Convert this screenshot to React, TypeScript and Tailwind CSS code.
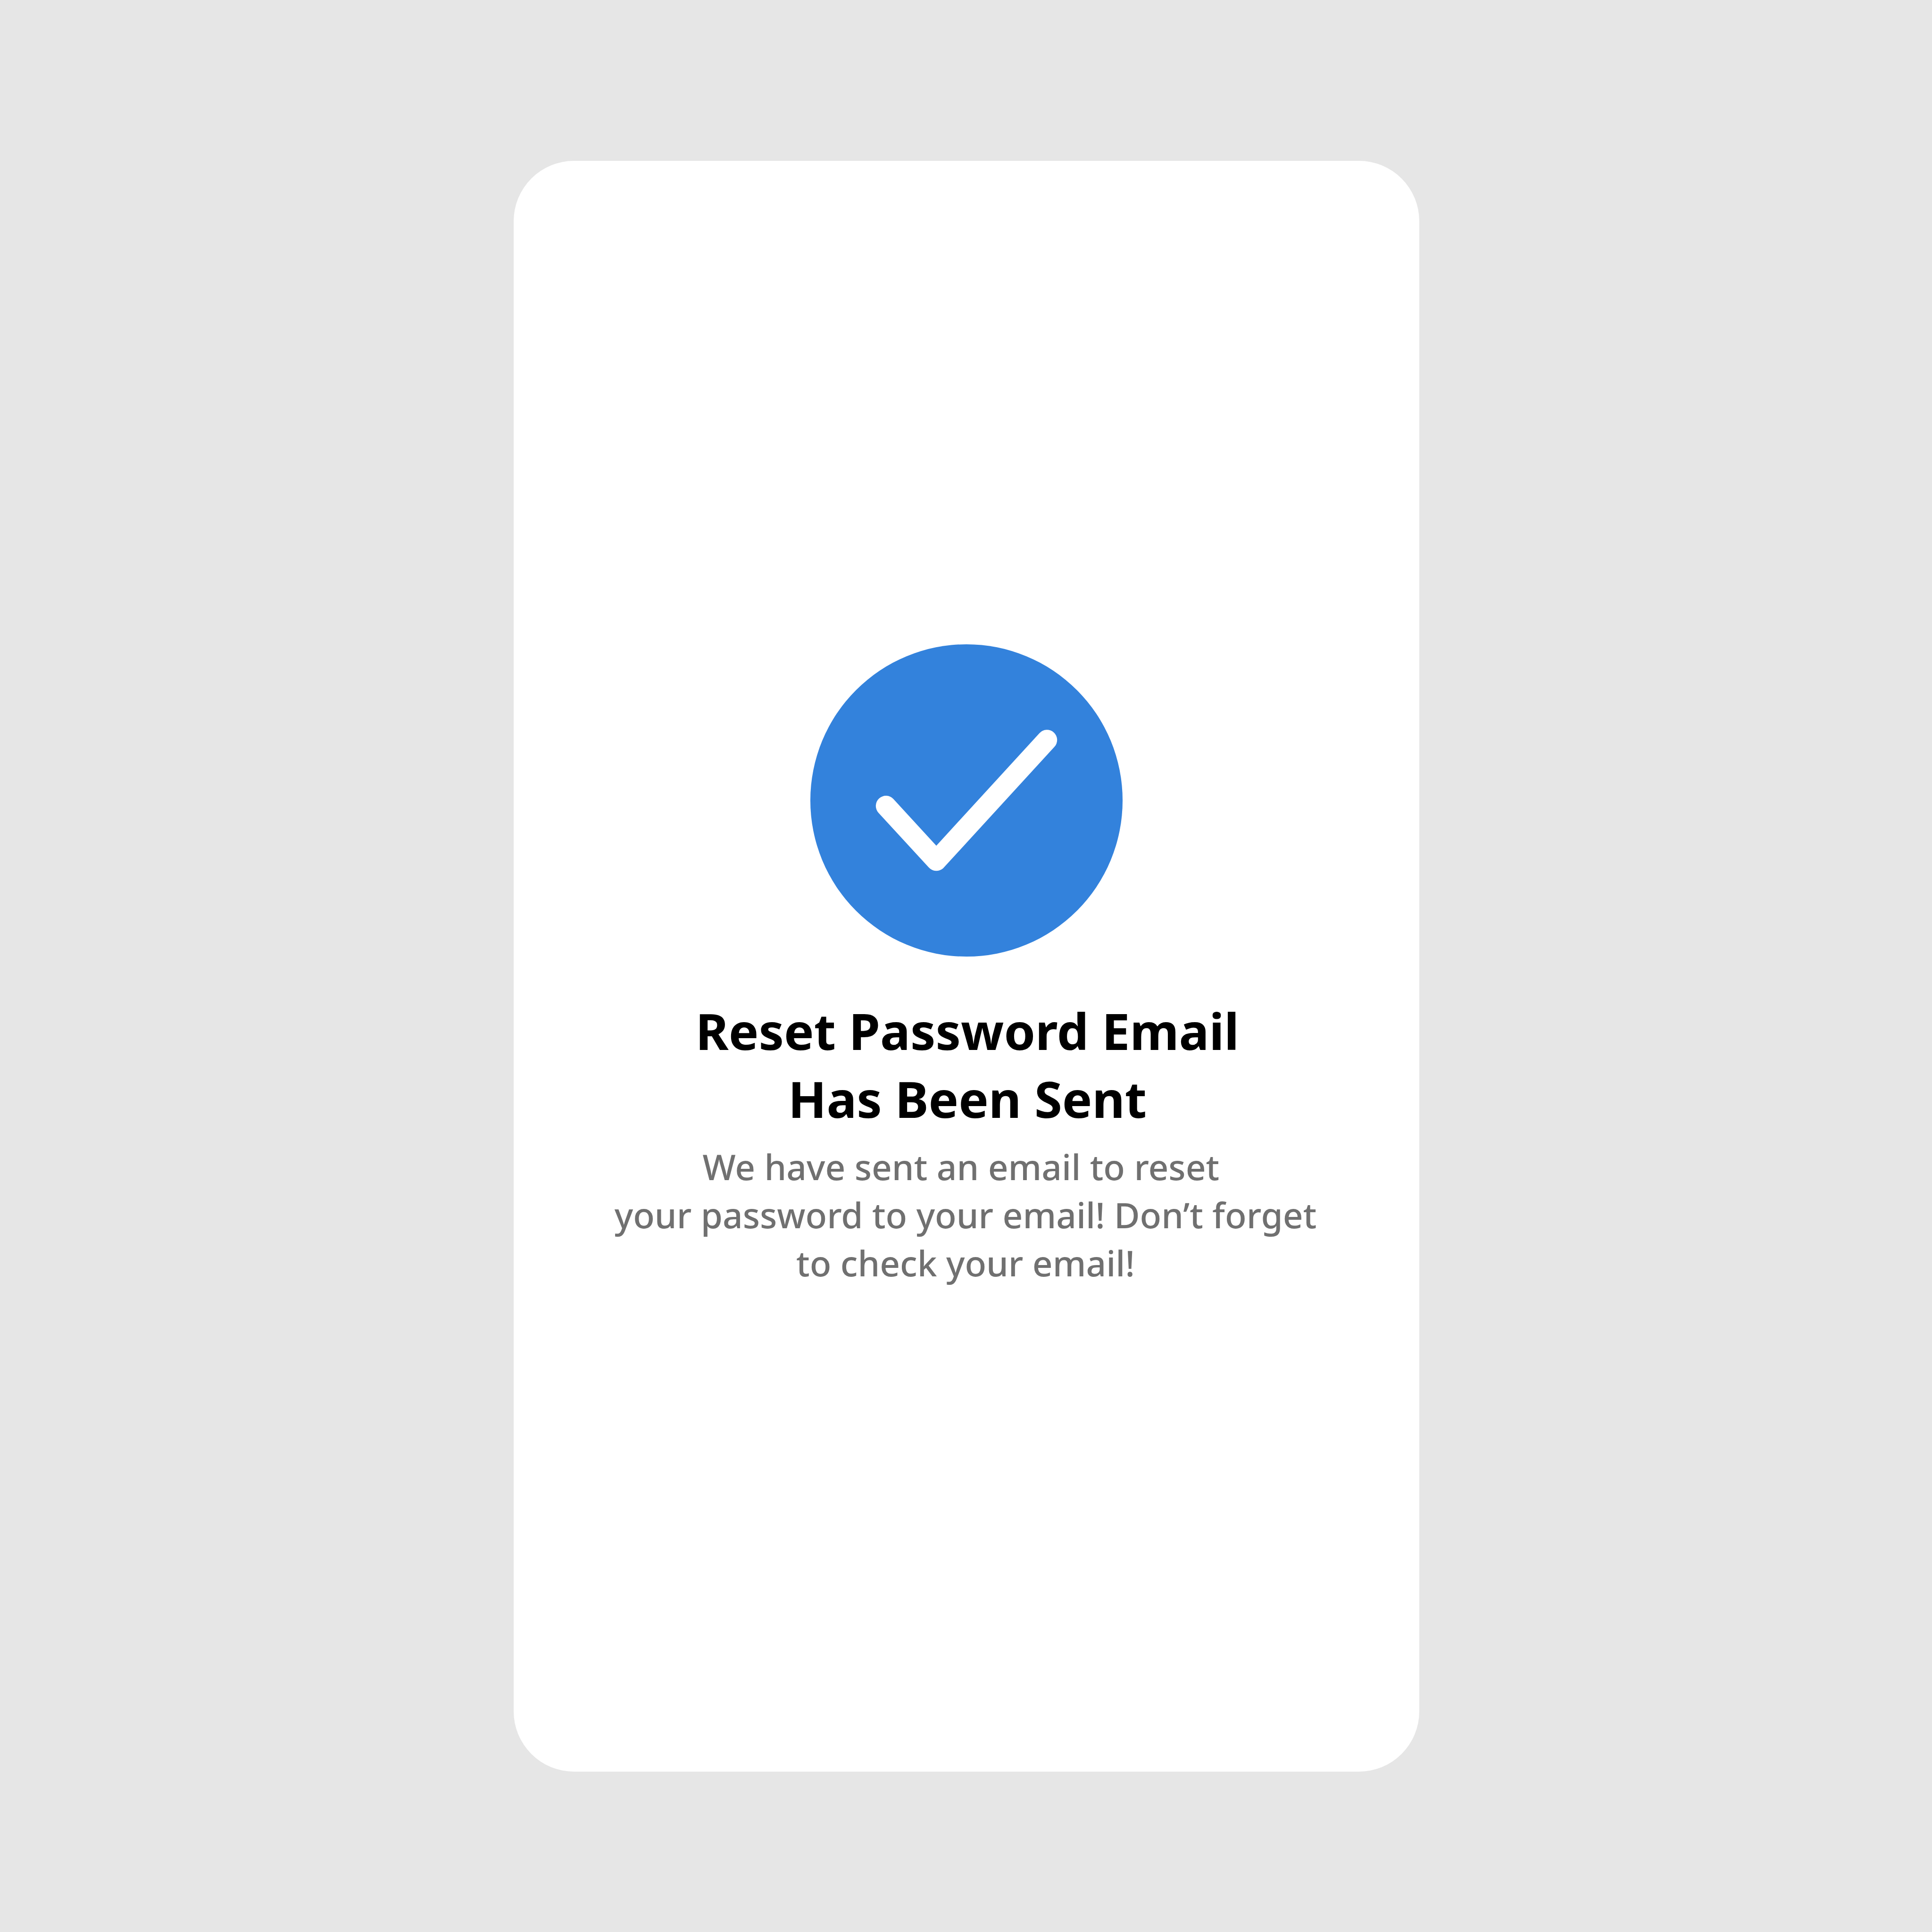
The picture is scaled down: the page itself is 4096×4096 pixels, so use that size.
export default function App() {
  return (
    <main className="flex h-[4096px] w-[4096px] items-start justify-center bg-[#e6e6e6] pt-[341.4px] pl-[2px] font-['Noto_Sans',sans-serif]">
      <section className="flex h-[3414.4px] w-[1920.6px] flex-col items-center rounded-[128px] bg-white pt-[1024.4px] text-center">
        <svg className="h-[662px] w-[662px] shrink-0" viewBox="0 0 662 662" fill="none">
          <circle cx="331" cy="331" r="331" fill="#3382dc" />
          <path d="M160.3 342.6L267.1 458.8L501.7 202.8" stroke="#fff" strokeWidth="43" strokeLinecap="round" strokeLinejoin="round" />
        </svg>
        <h1 className="mt-[85.4px] whitespace-nowrap pl-[4px] text-[106.7px] leading-[144px] font-bold text-black">
          Reset Password Email
          <br />
          Has Been Sent
        </h1>
        <p className="mt-[20.4px] whitespace-nowrap pr-[4px] text-[74.7px] leading-[102.3px] font-medium text-[#707070]">
          We have sent an email to reset&nbsp;
          <br />
          your password to your email! Don’t forget
          <br />
          to check your email!
        </p>
      </section>
    </main>
  );
}
